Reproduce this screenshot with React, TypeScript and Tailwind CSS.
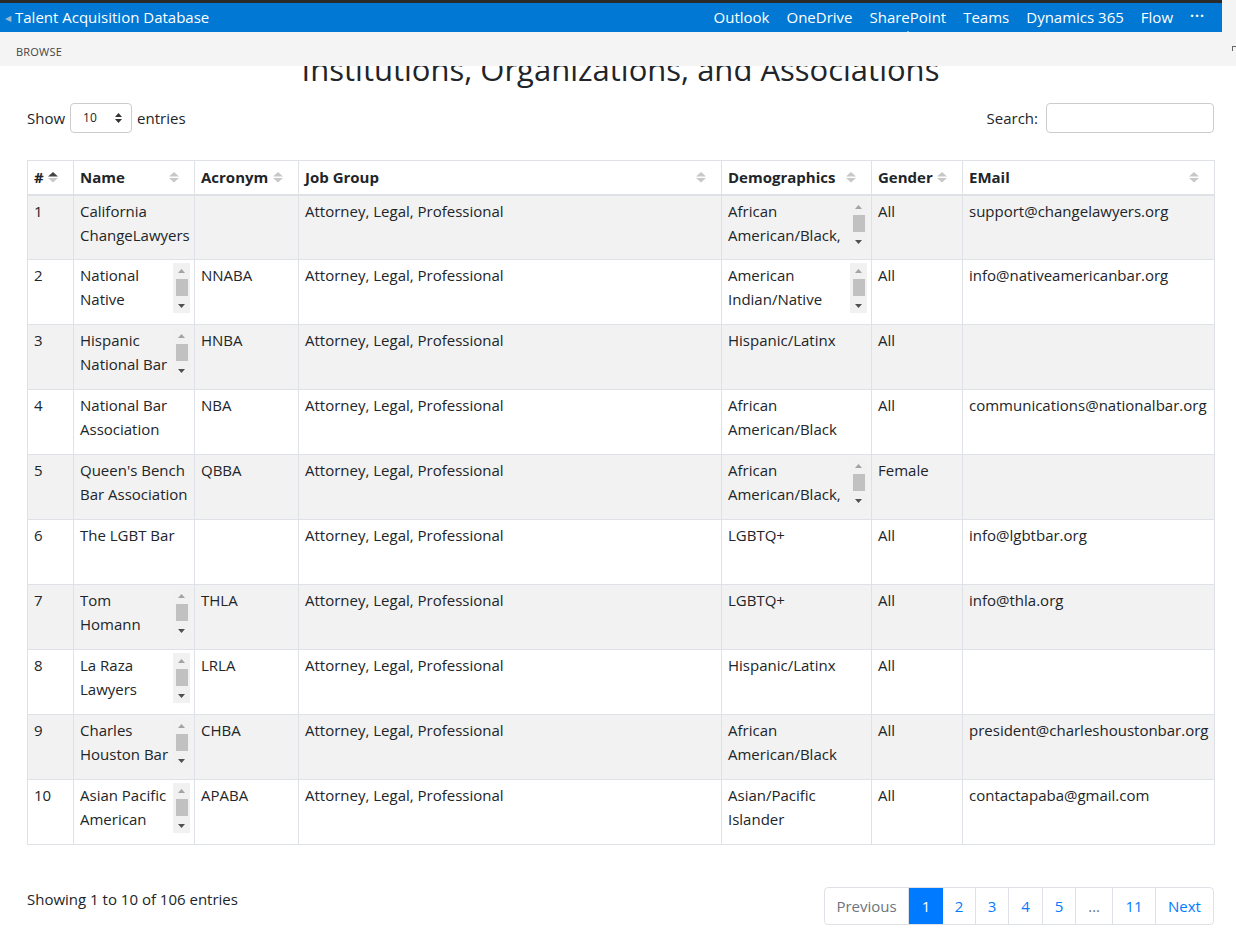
import React from "react";

type Row = {
  n: string;
  name: string[];
  nameScroll?: boolean;
  acr: string;
  demo: string[];
  demoScroll?: boolean;
  gender: string;
  email: string;
};

const rows: Row[] = [
  { n: "1", name: ["California", "ChangeLawyers"], acr: "", demo: ["African", "American/Black,"], demoScroll: true, gender: "All", email: "support@changelawyers.org" },
  { n: "2", name: ["National", "Native"], nameScroll: true, acr: "NNABA", demo: ["American", "Indian/Native"], demoScroll: true, gender: "All", email: "info@nativeamericanbar.org" },
  { n: "3", name: ["Hispanic", "National Bar"], nameScroll: true, acr: "HNBA", demo: ["Hispanic/Latinx"], gender: "All", email: "" },
  { n: "4", name: ["National Bar", "Association"], acr: "NBA", demo: ["African", "American/Black"], gender: "All", email: "communications@nationalbar.org" },
  { n: "5", name: ["Queen's Bench", "Bar Association"], acr: "QBBA", demo: ["African", "American/Black,"], demoScroll: true, gender: "Female", email: "" },
  { n: "6", name: ["The LGBT Bar"], acr: "", demo: ["LGBTQ+"], gender: "All", email: "info@lgbtbar.org" },
  { n: "7", name: ["Tom", "Homann"], nameScroll: true, acr: "THLA", demo: ["LGBTQ+"], gender: "All", email: "info@thla.org" },
  { n: "8", name: ["La Raza", "Lawyers"], nameScroll: true, acr: "LRLA", demo: ["Hispanic/Latinx"], gender: "All", email: "" },
  { n: "9", name: ["Charles", "Houston Bar"], nameScroll: true, acr: "CHBA", demo: ["African", "American/Black"], gender: "All", email: "president@charleshoustonbar.org" },
  { n: "10", name: ["Asian Pacific", "American"], nameScroll: true, acr: "APABA", demo: ["Asian/Pacific", "Islander"], gender: "All", email: "contactapaba@gmail.com" },
];

function Scrollbar() {
  return (
    <div className="w-[17px] h-[50px] bg-[#f1f1f1] flex flex-col items-center shrink-0">
      <div className="h-[16px] w-full flex items-center justify-center">
        <svg width="7" height="4" viewBox="0 0 7 4">
          <path d="M0 4 L3.5 0 L7 4Z" fill="#a3a3a3" />
        </svg>
      </div>
      <div className="w-[12px] h-[17px] bg-[#c1c1c1]" />
      <div className="flex-1" />
      <div className="h-[14px] w-full flex items-center justify-center">
        <svg width="7" height="4" viewBox="0 0 7 4">
          <path d="M0 0 L3.5 4 L7 0Z" fill="#505050" />
        </svg>
      </div>
    </div>
  );
}

function Lines({ lines, scroll }: { lines: string[]; scroll?: boolean }) {
  if (scroll) {
    return (
      <div className="flex h-[50px] -mr-[1px]">
        <div className="flex-1 overflow-hidden h-[48px]">
          {lines.map((l, i) => (
            <div key={i} className="whitespace-nowrap">{l}</div>
          ))}
        </div>
        <Scrollbar />
      </div>
    );
  }
  return (
    <div>
      {lines.map((l, i) => (
        <div key={i} className="whitespace-nowrap">{l}</div>
      ))}
    </div>
  );
}

function SortIcon({ active }: { active?: boolean }) {
  return (
    <svg width="10" height="11" viewBox="0 0 10 11" className="shrink-0">
      <path d="M0 4.5 L5 0 L10 4.5Z" fill={active ? "#444444" : "#c8c8c8"} />
      <path d="M0 6 L5 10.5 L10 6Z" fill="#c8c8c8" />
    </svg>
  );
}

const headers = [
  { t: "#", active: true },
  { t: "Name" },
  { t: "Acronym" },
  { t: "Job Group" },
  { t: "Demographics" },
  { t: "Gender" },
  { t: "EMail" },
];

export default function App() {
  const font = { fontFamily: '"Open Sans", "Noto Sans", sans-serif' };
  return (
    <div className="w-[1236px] h-[930px] overflow-hidden bg-white text-[#212529] flex flex-col" style={font}>
      {/* Suite bar */}
      <div className="h-[32px] shrink-0 flex">
        <div className="w-[1222px] flex flex-col">
          <div className="h-[3px] bg-[#2b2b2b]" />
          <div className="flex-1 bg-[#0078d4] flex items-center text-white text-[15px]">
            <span className="text-[#9fb8cf] text-[8px] ml-[5px] mr-[4px]">◀</span>
            <span>Talent Acquisition Database</span>
            <div className="flex-1" />
            <nav className="flex items-center gap-[17px] mr-[17px] text-[15px]">
              <span>Outlook</span>
              <span>OneDrive</span>
              <span className="relative">
                SharePoint
                <span className="absolute left-1/2 -translate-x-1/2 bottom-[-5px] w-0 h-0 border-l-[3px] border-r-[3px] border-b-[3px] border-l-transparent border-r-transparent border-b-white" />
              </span>
              <span>Teams</span>
              <span>Dynamics 365</span>
              <span>Flow</span>
              <span className="font-bold tracking-[1px] text-[14px] -mt-[4px]">···</span>
            </nav>
          </div>
        </div>
        <div className="flex-1 bg-[#f4f4f4]" />
      </div>
      {/* Ribbon */}
      <div className="h-[34px] shrink-0 bg-[#f4f4f4] flex items-start pt-[13px] pl-[16px] relative">
        <span className="text-[11px] leading-[14px] text-[#444444] tracking-[0.2px]">BROWSE</span>
        <span className="absolute right-[0px] top-[14px] w-[4px] h-[5px] border-l border-t border-[#666666]" />
      </div>
      {/* Content */}
      <div className="flex-1 overflow-hidden px-[27px] w-[1241px]">
        <h1 className="text-[31px] leading-[40px] text-center -mt-[17px] text-[#212529] w-[1187px]">
          Institutions, Organizations, and Associations
        </h1>
        <div className="flex items-center justify-between w-[1187px] mt-[14px] text-[15px]">
          <div className="flex items-center">
            <span>Show</span>
            <div className="ml-[5px] mr-[5px] w-[62px] h-[30px] border border-[#cccccc] rounded-[4px] flex items-center justify-between pl-[12px] pr-[9px]">
              <span className="text-[12px]">10</span>
              <svg width="7" height="10" viewBox="0 0 7 10">
                <path d="M0 4 L3.5 0 L7 4Z" fill="#333" />
                <path d="M0 6 L3.5 10 L7 6Z" fill="#333" />
              </svg>
            </div>
            <span>entries</span>
          </div>
          <div className="flex items-center">
            <span>Search:</span>
            <div className="ml-[8px] w-[168px] h-[30px] border border-[#cccccc] rounded-[4px]" />
          </div>
        </div>
        <table className="table-fixed border-collapse mt-[27px] text-[15px] leading-[24px]" style={{ width: 1187 }}>
          <colgroup>
            <col style={{ width: 46 }} />
            <col style={{ width: 121 }} />
            <col style={{ width: 104 }} />
            <col style={{ width: 423 }} />
            <col style={{ width: 150 }} />
            <col style={{ width: 91 }} />
            <col style={{ width: 252 }} />
          </colgroup>
          <thead>
            <tr className="h-[34px]">
              {headers.map((h) => (
                <th key={h.t} className="border border-[#dee2e6] border-b-2 px-[6px] pr-[15px] text-left font-bold align-middle">
                  <div className="flex items-center justify-between">
                    <span className="whitespace-nowrap">{h.t}</span>
                    <SortIcon active={h.active} />
                  </div>
                </th>
              ))}
            </tr>
          </thead>
          <tbody>
            {rows.map((r, i) => (
              <tr key={r.n} className={`h-[65px] ${i % 2 === 0 ? "bg-[#f2f2f2]" : "bg-white"}`}>
                <td className="border border-[#dee2e6] align-top px-[6px] pt-[3px]">{r.n}</td>
                <td className="border border-[#dee2e6] align-top pl-[6px] pr-[5px] pt-[3px]">
                  <Lines lines={r.name} scroll={r.nameScroll} />
                </td>
                <td className="border border-[#dee2e6] align-top px-[6px] pt-[3px]">{r.acr}</td>
                <td className="border border-[#dee2e6] align-top px-[6px] pt-[3px] whitespace-nowrap">Attorney, Legal, Professional</td>
                <td className="border border-[#dee2e6] align-top pl-[6px] pr-[5px] pt-[3px]">
                  <Lines lines={r.demo} scroll={r.demoScroll} />
                </td>
                <td className="border border-[#dee2e6] align-top px-[6px] pt-[3px]">{r.gender}</td>
                <td className="border border-[#dee2e6] align-top px-[6px] pt-[3px] whitespace-nowrap">{r.email}</td>
              </tr>
            ))}
          </tbody>
        </table>
        <div className="flex items-center justify-between w-[1187px] mt-[42px] text-[15px]">
          <span className="-mt-[14px]">Showing 1 to 10 of 106 entries</span>
          <div className="flex h-[38px] border border-[#dee2e6] rounded-[4px] overflow-hidden">
            <span className="w-[84px] flex items-center justify-center text-[#6c757d] border-r border-[#dee2e6]">Previous</span>
            <span className="w-[34px] flex items-center justify-center bg-[#007bff] text-white">1</span>
            <span className="w-[33px] flex items-center justify-center text-[#007bff] border-r border-[#dee2e6]">2</span>
            <span className="w-[33px] flex items-center justify-center text-[#007bff] border-r border-[#dee2e6]">3</span>
            <span className="w-[34px] flex items-center justify-center text-[#007bff] border-r border-[#dee2e6]">4</span>
            <span className="w-[33px] flex items-center justify-center text-[#007bff] border-r border-[#dee2e6]">5</span>
            <span className="w-[37px] flex items-center justify-center text-[#6c757d] border-r border-[#dee2e6]">…</span>
            <span className="w-[43px] flex items-center justify-center text-[#007bff] border-r border-[#dee2e6]">11</span>
            <span className="w-[57px] flex items-center justify-center text-[#007bff]">Next</span>
          </div>
        </div>
      </div>
    </div>
  );
}
